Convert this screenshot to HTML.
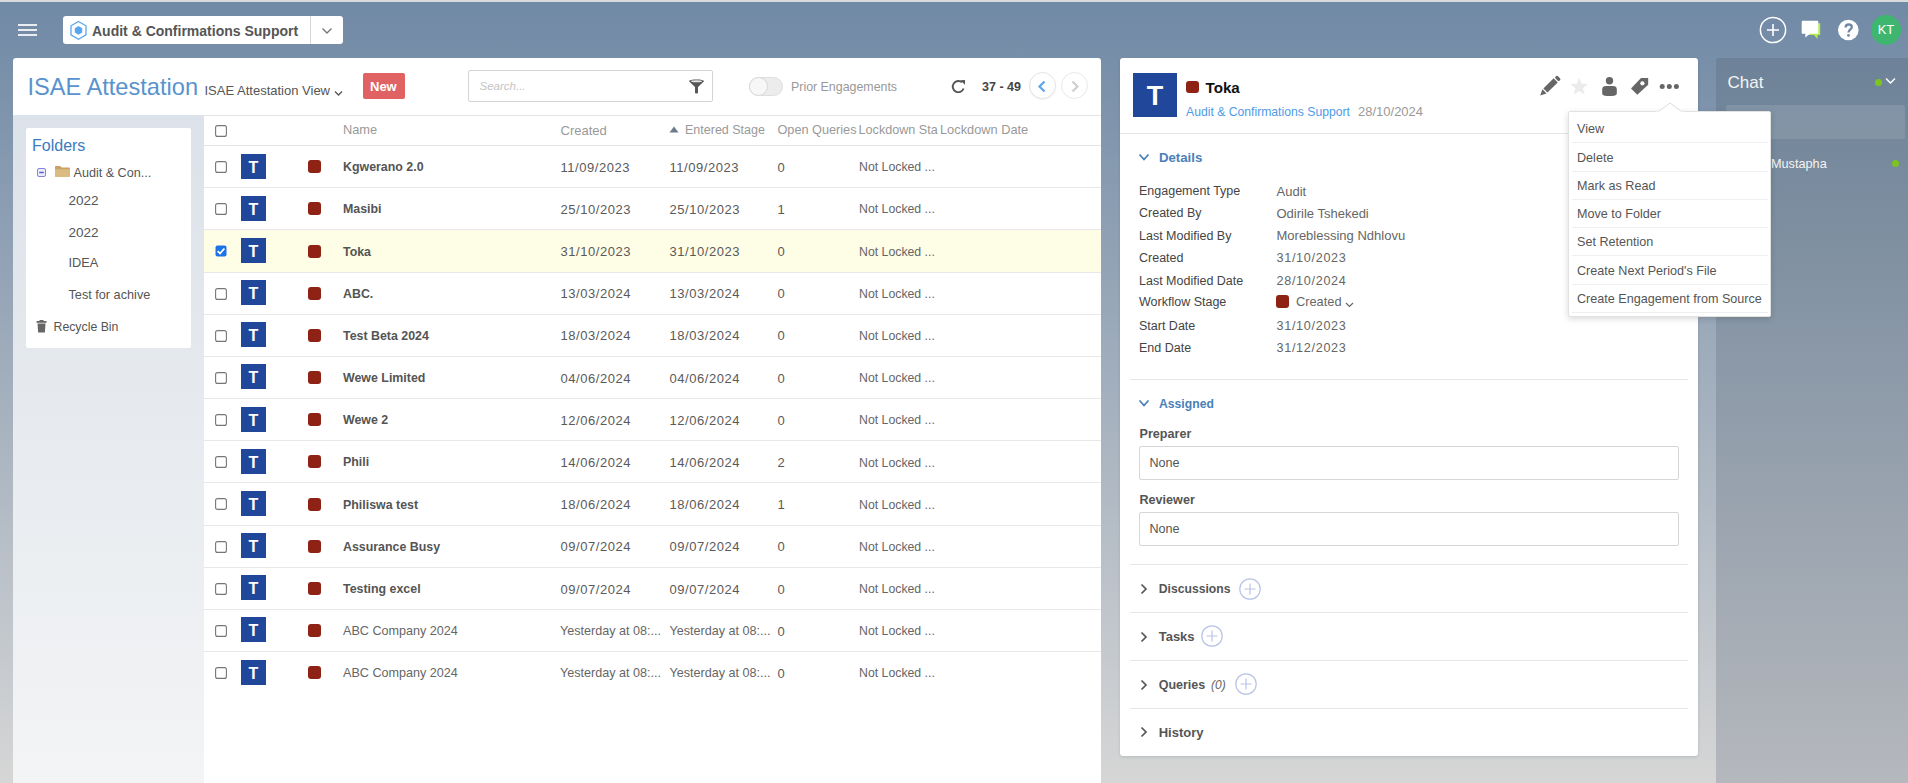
<!DOCTYPE html>
<html><head><meta charset="utf-8"><style>
html,body{margin:0;padding:0}
body{width:1908px;height:783px;overflow:hidden;position:relative;font-family:'Liberation Sans', sans-serif;background:linear-gradient(to bottom,#7089a5 0px,#d6d6d6 783px)}
.t{position:absolute;white-space:nowrap}
.b{position:absolute}
svg.b{overflow:visible}
</style></head><body>
<div class="b" style="left:0px;top:0px;width:1908px;height:2px;background:#d9dadb"></div>
<div class="b" style="left:18px;top:24px;width:19px;height:2px;background:#e9edf2"></div>
<div class="b" style="left:18px;top:29px;width:19px;height:2px;background:#e9edf2"></div>
<div class="b" style="left:18px;top:34px;width:19px;height:2px;background:#e9edf2"></div>
<div class="b" style="left:63px;top:16px;width:280px;height:28px;background:#fff;border-radius:3px"></div>
<div class="b" style="left:310px;top:16px;width:1px;height:28px;background:#d6d6d6"></div>
<svg class="b" style="left:69px;top:20px" width="19" height="21" viewBox="0 0 19 21"><polygon points="9.5,1.5 17,5.8 17,14.8 9.5,19.3 2,14.8 2,5.8" fill="none" stroke="#5aa6ee" stroke-width="1.3"/><polygon points="9.5,6 13.2,8.2 13.2,12.6 9.5,14.8 5.8,12.6 5.8,8.2" fill="#5aa6ee"/></svg>
<div class="t" style="left:92px;top:24.15px;font-size:14px;line-height:14px;color:#555;font-weight:bold;font-style:normal;letter-spacing:0px;">Audit &amp; Confirmations Support</div>
<svg class="b" style="left:321px;top:27px" width="12" height="8" viewBox="0 0 12 8"><polyline points="1.5,1.5 6,6 10.5,1.5" fill="none" stroke="#777" stroke-width="1.4"/></svg>
<svg class="b" style="left:1759px;top:16px" width="28" height="28" viewBox="0 0 28 28"><circle cx="14" cy="14" r="12.6" fill="none" stroke="#fff" stroke-width="1.5"/><path d="M14 8v12M8 14h12" stroke="#fff" stroke-width="1.6"/></svg>
<svg class="b" style="left:1800px;top:19px" width="22" height="22" viewBox="0 0 22 22"><path d="M5 4.2h15.2v11.8H17.5v4l-3.5-4H7.5z" fill="#b5f04a"/><path d="M2.6 1.8h14.8c.5 0 .9.4.9.9v11.2c0 .5-.4.9-.9.9H9.8l-4.5 3.6v-3.6H2.6c-.5 0-.9-.4-.9-.9V2.7c0-.5.4-.9.9-.9z" fill="#fff"/></svg>
<svg class="b" style="left:1830px;top:14px" width="40" height="32" viewBox="1830 14 40 32"><circle cx="1848.3" cy="30" r="10.3" fill="#fff"/><path d="M1845.6 27.4C1845.6 25.4 1846.9 24.5 1848.7 24.5C1850.6 24.5 1851.8 25.6 1851.8 27.1C1851.8 28.7 1850.5 29.3 1849.6 30.1C1848.9 30.7 1848.6 31.3 1848.6 32.6" fill="none" stroke="#7189a5" stroke-width="2.3"/><circle cx="1848.5" cy="35.4" r="1.4" fill="#7189a5"/></svg>
<div class="b" style="left:1871px;top:15px;width:30px;height:30px;background:#3fb66f;border-radius:50%"></div>
<div class="t" style="left:1876px;top:22.80px;font-size:13px;line-height:13px;color:#fff;font-weight:normal;font-style:normal;letter-spacing:0px;width:20px;text-align:center;left:1876px">KT</div>
<div class="b" style="left:13px;top:58px;width:1088px;height:725px;background:#fff;border-radius:3px 3px 0 0"></div>
<div class="t" style="left:27.5px;top:76.22px;font-size:23.6px;line-height:23.6px;color:#5893cd;font-weight:normal;font-style:normal;letter-spacing:0px;">ISAE Attestation</div>
<div class="t" style="left:204.5px;top:84.00px;font-size:13px;line-height:13px;color:#555;font-weight:normal;font-style:normal;letter-spacing:0px;">ISAE Attestation View</div>
<svg class="b" style="left:334px;top:90px" width="9" height="7" viewBox="0 0 9 7"><polyline points="1,1.5 4.5,5 8,1.5" fill="none" stroke="#555" stroke-width="1.3"/></svg>
<div class="b" style="left:363px;top:73px;width:42px;height:26px;background:#e06262;border-radius:2px"></div>
<div class="t" style="left:370px;top:79.50px;font-size:13px;line-height:13px;color:#fff;font-weight:bold;font-style:normal;letter-spacing:0px;">New</div>
<div class="b" style="left:468px;top:70px;width:245px;height:32px;background:#fff;border:1px solid #d4d4d4;box-sizing:border-box;border-radius:2px"></div>
<div class="t" style="left:479.5px;top:81.27px;font-size:11.5px;line-height:11.5px;color:#c4c4c4;font-weight:normal;font-style:italic;letter-spacing:0px;">Search...</div>
<svg class="b" style="left:688px;top:79px" width="17" height="15" viewBox="0 0 17 15"><path d="M1 2.2C1 1 4.5.5 8.5.5S16 1 16 2.2L10 8v5.5c0 .6-.7 1-1.5 1s-1.5-.4-1.5-1V8z" fill="#575757"/><ellipse cx="8.5" cy="2.3" rx="5.5" ry="1" fill="#e6e6e6"/></svg>
<div class="b" style="left:749px;top:77px;width:34px;height:19px;background:#ececec;border:1px solid #dedede;box-sizing:border-box;border-radius:10px"></div>
<div class="b" style="left:749px;top:77px;width:19px;height:19px;background:#f7f7f7;border:1px solid #d8d8d8;box-sizing:border-box;border-radius:50%"></div>
<div class="t" style="left:791px;top:80.50px;font-size:12.4px;line-height:12.4px;color:#999;font-weight:normal;font-style:normal;letter-spacing:0px;">Prior Engagements</div>
<svg class="b" style="left:950px;top:79px" width="17" height="15" viewBox="0 0 17 15"><path d="M13.6 9.5A5.6 5.6 0 1 1 12 3.3" fill="none" stroke="#555" stroke-width="1.9"/><path d="M10.2 1.2L15 1v4.8z" fill="#555"/></svg>
<div class="t" style="left:982px;top:81.02px;font-size:12.5px;line-height:12.5px;color:#444;font-weight:bold;font-style:normal;letter-spacing:0px;">37 - 49</div>
<div class="b" style="left:1029px;top:72px;width:27px;height:27px;background:#fff;border:1px solid #e3e3e3;box-sizing:border-box;border-radius:50%;box-shadow:0 1px 1px rgba(0,0,0,.05)"></div>
<svg class="b" style="left:1037px;top:80px" width="10" height="13" viewBox="0 0 10 13"><polyline points="7.5,1.5 2.5,6.5 7.5,11.5" fill="none" stroke="#5aa5ee" stroke-width="2.2"/></svg>
<div class="b" style="left:1061px;top:72px;width:27px;height:27px;background:#fff;border:1px solid #e8e8e8;box-sizing:border-box;border-radius:50%"></div>
<svg class="b" style="left:1070px;top:80px" width="10" height="13" viewBox="0 0 10 13"><polyline points="2.5,1.5 7.5,6.5 2.5,11.5" fill="none" stroke="#cfcfcf" stroke-width="2.2"/></svg>
<div class="b" style="left:13px;top:115px;width:191px;height:668px;background:linear-gradient(to bottom,#dce2e9,#f3f4f5)"></div>
<div class="b" style="left:26px;top:128px;width:165px;height:220px;background:#fff;border-radius:2px"></div>
<div class="t" style="left:32px;top:138.26px;font-size:16px;line-height:16px;color:#3a7cbf;font-weight:normal;font-style:normal;letter-spacing:0px;">Folders</div>
<svg class="b" style="left:37px;top:168px" width="9" height="9" viewBox="0 0 9 9"><rect x=".5" y=".5" width="8" height="8" rx="1.5" fill="#ececfa" stroke="#8484d0"/><path d="M2.2 4.5h4.6" stroke="#5c5cd8" stroke-width="1.5"/></svg>
<svg class="b" style="left:55px;top:166px" width="15" height="11" viewBox="0 0 15 12" preserveAspectRatio="none"><path d="M0 1.2C0 .5.5 0 1.2 0h4l1.5 1.5h7c.7 0 1.3.5 1.3 1.2v8c0 .7-.6 1.3-1.3 1.3H1.2C.5 12 0 11.4 0 10.7z" fill="#c9a263"/><path d="M0 3.5h15v7.2c0 .7-.6 1.3-1.3 1.3H1.2C.5 12 0 11.4 0 10.7z" fill="#dcbb80"/></svg>
<div class="t" style="left:73.5px;top:167.13px;font-size:12.6px;line-height:12.6px;color:#555;font-weight:normal;font-style:normal;letter-spacing:0px;">Audit &amp; Con...</div>
<div class="t" style="left:68.5px;top:193.57px;font-size:13.5px;line-height:13.5px;color:#555;font-weight:normal;font-style:normal;letter-spacing:0px;">2022</div>
<div class="t" style="left:68.5px;top:225.57px;font-size:13.5px;line-height:13.5px;color:#555;font-weight:normal;font-style:normal;letter-spacing:0px;">2022</div>
<div class="t" style="left:68.5px;top:257.16px;font-size:12.8px;line-height:12.8px;color:#555;font-weight:normal;font-style:normal;letter-spacing:0px;">IDEA</div>
<div class="t" style="left:68.5px;top:289.25px;font-size:12.7px;line-height:12.7px;color:#555;font-weight:normal;font-style:normal;letter-spacing:0px;">Test for achive</div>
<svg class="b" style="left:36px;top:320px" width="11" height="13" viewBox="0 0 11 13"><rect x="0.5" y="1" width="10" height="1.8" fill="#666"/><rect x="3.5" y="0" width="4" height="1.5" fill="#666"/><path d="M1.5 3.5h8l-.6 9H2.1z" fill="#666"/></svg>
<div class="t" style="left:53.5px;top:320.59px;font-size:12.3px;line-height:12.3px;color:#555;font-weight:normal;font-style:normal;letter-spacing:0px;">Recycle Bin</div>
<div class="b" style="left:204px;top:115px;width:897px;height:1px;background:#e4e4e4"></div>
<div class="b" style="left:204px;top:145px;width:897px;height:1px;background:#e4e4e4"></div>
<svg class="b" style="left:215px;top:125px" width="12" height="12" viewBox="0 0 12 12"><rect x=".6" y=".6" width="10.8" height="10.8" rx="2" fill="#fff" stroke="#767676" stroke-width="1.1"/></svg>
<div class="t" style="left:343px;top:124.16px;font-size:12.8px;line-height:12.8px;color:#999;font-weight:normal;font-style:normal;letter-spacing:0px;">Name</div>
<div class="t" style="left:560.5px;top:124.00px;font-size:13px;line-height:13px;color:#999;font-weight:normal;font-style:normal;letter-spacing:0px;">Created</div>
<svg class="b" style="left:669px;top:126px" width="10" height="7" viewBox="0 0 10 7"><polygon points="5,0.5 9.5,6.5 0.5,6.5" fill="#6d7a8a"/></svg>
<div class="t" style="left:685px;top:124.42px;font-size:12.5px;line-height:12.5px;color:#999;font-weight:normal;font-style:normal;letter-spacing:0px;">Entered Stage</div>
<div class="t" style="left:777.5px;top:124.25px;font-size:12.7px;line-height:12.7px;color:#999;font-weight:normal;font-style:normal;letter-spacing:0px;">Open Queries</div>
<div class="t" style="left:858.6px;top:124.33px;font-size:12.6px;line-height:12.6px;color:#999;font-weight:normal;font-style:normal;letter-spacing:0px;">Lockdown Sta</div>
<div class="t" style="left:940px;top:124.16px;font-size:12.8px;line-height:12.8px;color:#999;font-weight:normal;font-style:normal;letter-spacing:0px;">Lockdown Date</div>
<div class="b" style="left:204px;top:187px;width:897px;height:1px;background:#e8e8e8"></div>
<svg class="b" style="left:215px;top:161px" width="12" height="12" viewBox="0 0 12 12"><rect x=".6" y=".6" width="10.8" height="10.8" rx="2" fill="#fff" stroke="#767676" stroke-width="1.1"/></svg>
<div class="b" style="left:241px;top:153.50px;width:25px;height:25px;background:#21479a;color:#fff;font:bold 16px/27px 'Liberation Sans', sans-serif;text-align:center">T</div>
<div class="b" style="left:308px;top:160.20px;width:13px;height:13px;background:#8e2215;border-radius:3px"></div>
<div class="t" style="left:343px;top:161.20px;font-size:12.4px;line-height:12.4px;color:#555;font-weight:bold;font-style:normal;letter-spacing:0px;">Kgwerano 2.0</div>
<div class="t" style="left:560.5px;top:160.70px;font-size:13px;line-height:13px;color:#5a5a5a;font-weight:normal;font-style:normal;letter-spacing:0.55px;">11/09/2023</div>
<div class="t" style="left:669.5px;top:160.70px;font-size:13px;line-height:13px;color:#5a5a5a;font-weight:normal;font-style:normal;letter-spacing:0.55px;">11/09/2023</div>
<div class="t" style="left:777.5px;top:160.70px;font-size:13px;line-height:13px;color:#5a5a5a;font-weight:normal;font-style:normal;letter-spacing:0px;">0</div>
<div class="t" style="left:859px;top:161.29px;font-size:12.3px;line-height:12.3px;color:#666;font-weight:normal;font-style:normal;letter-spacing:0px;">Not Locked ...</div>
<div class="b" style="left:204px;top:229px;width:897px;height:1px;background:#e8e8e8"></div>
<svg class="b" style="left:215px;top:203px" width="12" height="12" viewBox="0 0 12 12"><rect x=".6" y=".6" width="10.8" height="10.8" rx="2" fill="#fff" stroke="#767676" stroke-width="1.1"/></svg>
<div class="b" style="left:241px;top:195.68px;width:25px;height:25px;background:#21479a;color:#fff;font:bold 16px/27px 'Liberation Sans', sans-serif;text-align:center">T</div>
<div class="b" style="left:308px;top:202.38px;width:13px;height:13px;background:#8e2215;border-radius:3px"></div>
<div class="t" style="left:343px;top:203.38px;font-size:12.4px;line-height:12.4px;color:#555;font-weight:bold;font-style:normal;letter-spacing:0px;">Masibi</div>
<div class="t" style="left:560.5px;top:202.88px;font-size:13px;line-height:13px;color:#5a5a5a;font-weight:normal;font-style:normal;letter-spacing:0.55px;">25/10/2023</div>
<div class="t" style="left:669.5px;top:202.88px;font-size:13px;line-height:13px;color:#5a5a5a;font-weight:normal;font-style:normal;letter-spacing:0.55px;">25/10/2023</div>
<div class="t" style="left:777.5px;top:202.88px;font-size:13px;line-height:13px;color:#5a5a5a;font-weight:normal;font-style:normal;letter-spacing:0px;">1</div>
<div class="t" style="left:859px;top:203.47px;font-size:12.3px;line-height:12.3px;color:#666;font-weight:normal;font-style:normal;letter-spacing:0px;">Not Locked ...</div>
<div class="b" style="left:204px;top:230px;width:897px;height:42px;background:#fefde5"></div>
<div class="b" style="left:204px;top:272px;width:897px;height:1px;background:#e8e8e8"></div>
<svg class="b" style="left:215px;top:245px" width="12" height="12" viewBox="0 0 12 12"><rect x=".5" y=".5" width="11" height="11" rx="2" fill="#1a73e8"/><polyline points="2.6,6.2 5,8.5 9.4,3.5" fill="none" stroke="#fff" stroke-width="1.8"/></svg>
<div class="b" style="left:241px;top:237.86px;width:25px;height:25px;background:#21479a;color:#fff;font:bold 16px/27px 'Liberation Sans', sans-serif;text-align:center">T</div>
<div class="b" style="left:308px;top:244.56px;width:13px;height:13px;background:#8e2215;border-radius:3px"></div>
<div class="t" style="left:343px;top:245.56px;font-size:12.4px;line-height:12.4px;color:#555;font-weight:bold;font-style:normal;letter-spacing:0px;">Toka</div>
<div class="t" style="left:560.5px;top:245.06px;font-size:13px;line-height:13px;color:#5a5a5a;font-weight:normal;font-style:normal;letter-spacing:0.55px;">31/10/2023</div>
<div class="t" style="left:669.5px;top:245.06px;font-size:13px;line-height:13px;color:#5a5a5a;font-weight:normal;font-style:normal;letter-spacing:0.55px;">31/10/2023</div>
<div class="t" style="left:777.5px;top:245.06px;font-size:13px;line-height:13px;color:#5a5a5a;font-weight:normal;font-style:normal;letter-spacing:0px;">0</div>
<div class="t" style="left:859px;top:245.65px;font-size:12.3px;line-height:12.3px;color:#666;font-weight:normal;font-style:normal;letter-spacing:0px;">Not Locked ...</div>
<div class="b" style="left:204px;top:314px;width:897px;height:1px;background:#e8e8e8"></div>
<svg class="b" style="left:215px;top:288px" width="12" height="12" viewBox="0 0 12 12"><rect x=".6" y=".6" width="10.8" height="10.8" rx="2" fill="#fff" stroke="#767676" stroke-width="1.1"/></svg>
<div class="b" style="left:241px;top:280.04px;width:25px;height:25px;background:#21479a;color:#fff;font:bold 16px/27px 'Liberation Sans', sans-serif;text-align:center">T</div>
<div class="b" style="left:308px;top:286.74px;width:13px;height:13px;background:#8e2215;border-radius:3px"></div>
<div class="t" style="left:343px;top:287.74px;font-size:12.4px;line-height:12.4px;color:#555;font-weight:bold;font-style:normal;letter-spacing:0px;">ABC.</div>
<div class="t" style="left:560.5px;top:287.24px;font-size:13px;line-height:13px;color:#5a5a5a;font-weight:normal;font-style:normal;letter-spacing:0.55px;">13/03/2024</div>
<div class="t" style="left:669.5px;top:287.24px;font-size:13px;line-height:13px;color:#5a5a5a;font-weight:normal;font-style:normal;letter-spacing:0.55px;">13/03/2024</div>
<div class="t" style="left:777.5px;top:287.24px;font-size:13px;line-height:13px;color:#5a5a5a;font-weight:normal;font-style:normal;letter-spacing:0px;">0</div>
<div class="t" style="left:859px;top:287.83px;font-size:12.3px;line-height:12.3px;color:#666;font-weight:normal;font-style:normal;letter-spacing:0px;">Not Locked ...</div>
<div class="b" style="left:204px;top:356px;width:897px;height:1px;background:#e8e8e8"></div>
<svg class="b" style="left:215px;top:330px" width="12" height="12" viewBox="0 0 12 12"><rect x=".6" y=".6" width="10.8" height="10.8" rx="2" fill="#fff" stroke="#767676" stroke-width="1.1"/></svg>
<div class="b" style="left:241px;top:322.22px;width:25px;height:25px;background:#21479a;color:#fff;font:bold 16px/27px 'Liberation Sans', sans-serif;text-align:center">T</div>
<div class="b" style="left:308px;top:328.92px;width:13px;height:13px;background:#8e2215;border-radius:3px"></div>
<div class="t" style="left:343px;top:329.92px;font-size:12.4px;line-height:12.4px;color:#555;font-weight:bold;font-style:normal;letter-spacing:0px;">Test Beta 2024</div>
<div class="t" style="left:560.5px;top:329.42px;font-size:13px;line-height:13px;color:#5a5a5a;font-weight:normal;font-style:normal;letter-spacing:0.55px;">18/03/2024</div>
<div class="t" style="left:669.5px;top:329.42px;font-size:13px;line-height:13px;color:#5a5a5a;font-weight:normal;font-style:normal;letter-spacing:0.55px;">18/03/2024</div>
<div class="t" style="left:777.5px;top:329.42px;font-size:13px;line-height:13px;color:#5a5a5a;font-weight:normal;font-style:normal;letter-spacing:0px;">0</div>
<div class="t" style="left:859px;top:330.01px;font-size:12.3px;line-height:12.3px;color:#666;font-weight:normal;font-style:normal;letter-spacing:0px;">Not Locked ...</div>
<div class="b" style="left:204px;top:398px;width:897px;height:1px;background:#e8e8e8"></div>
<svg class="b" style="left:215px;top:372px" width="12" height="12" viewBox="0 0 12 12"><rect x=".6" y=".6" width="10.8" height="10.8" rx="2" fill="#fff" stroke="#767676" stroke-width="1.1"/></svg>
<div class="b" style="left:241px;top:364.40px;width:25px;height:25px;background:#21479a;color:#fff;font:bold 16px/27px 'Liberation Sans', sans-serif;text-align:center">T</div>
<div class="b" style="left:308px;top:371.10px;width:13px;height:13px;background:#8e2215;border-radius:3px"></div>
<div class="t" style="left:343px;top:372.10px;font-size:12.4px;line-height:12.4px;color:#555;font-weight:bold;font-style:normal;letter-spacing:0px;">Wewe Limited</div>
<div class="t" style="left:560.5px;top:371.60px;font-size:13px;line-height:13px;color:#5a5a5a;font-weight:normal;font-style:normal;letter-spacing:0.55px;">04/06/2024</div>
<div class="t" style="left:669.5px;top:371.60px;font-size:13px;line-height:13px;color:#5a5a5a;font-weight:normal;font-style:normal;letter-spacing:0.55px;">04/06/2024</div>
<div class="t" style="left:777.5px;top:371.60px;font-size:13px;line-height:13px;color:#5a5a5a;font-weight:normal;font-style:normal;letter-spacing:0px;">0</div>
<div class="t" style="left:859px;top:372.19px;font-size:12.3px;line-height:12.3px;color:#666;font-weight:normal;font-style:normal;letter-spacing:0px;">Not Locked ...</div>
<div class="b" style="left:204px;top:440px;width:897px;height:1px;background:#e8e8e8"></div>
<svg class="b" style="left:215px;top:414px" width="12" height="12" viewBox="0 0 12 12"><rect x=".6" y=".6" width="10.8" height="10.8" rx="2" fill="#fff" stroke="#767676" stroke-width="1.1"/></svg>
<div class="b" style="left:241px;top:406.58px;width:25px;height:25px;background:#21479a;color:#fff;font:bold 16px/27px 'Liberation Sans', sans-serif;text-align:center">T</div>
<div class="b" style="left:308px;top:413.28px;width:13px;height:13px;background:#8e2215;border-radius:3px"></div>
<div class="t" style="left:343px;top:414.28px;font-size:12.4px;line-height:12.4px;color:#555;font-weight:bold;font-style:normal;letter-spacing:0px;">Wewe 2</div>
<div class="t" style="left:560.5px;top:413.78px;font-size:13px;line-height:13px;color:#5a5a5a;font-weight:normal;font-style:normal;letter-spacing:0.55px;">12/06/2024</div>
<div class="t" style="left:669.5px;top:413.78px;font-size:13px;line-height:13px;color:#5a5a5a;font-weight:normal;font-style:normal;letter-spacing:0.55px;">12/06/2024</div>
<div class="t" style="left:777.5px;top:413.78px;font-size:13px;line-height:13px;color:#5a5a5a;font-weight:normal;font-style:normal;letter-spacing:0px;">0</div>
<div class="t" style="left:859px;top:414.37px;font-size:12.3px;line-height:12.3px;color:#666;font-weight:normal;font-style:normal;letter-spacing:0px;">Not Locked ...</div>
<div class="b" style="left:204px;top:482px;width:897px;height:1px;background:#e8e8e8"></div>
<svg class="b" style="left:215px;top:456px" width="12" height="12" viewBox="0 0 12 12"><rect x=".6" y=".6" width="10.8" height="10.8" rx="2" fill="#fff" stroke="#767676" stroke-width="1.1"/></svg>
<div class="b" style="left:241px;top:448.76px;width:25px;height:25px;background:#21479a;color:#fff;font:bold 16px/27px 'Liberation Sans', sans-serif;text-align:center">T</div>
<div class="b" style="left:308px;top:455.46px;width:13px;height:13px;background:#8e2215;border-radius:3px"></div>
<div class="t" style="left:343px;top:456.46px;font-size:12.4px;line-height:12.4px;color:#555;font-weight:bold;font-style:normal;letter-spacing:0px;">Phili</div>
<div class="t" style="left:560.5px;top:455.96px;font-size:13px;line-height:13px;color:#5a5a5a;font-weight:normal;font-style:normal;letter-spacing:0.55px;">14/06/2024</div>
<div class="t" style="left:669.5px;top:455.96px;font-size:13px;line-height:13px;color:#5a5a5a;font-weight:normal;font-style:normal;letter-spacing:0.55px;">14/06/2024</div>
<div class="t" style="left:777.5px;top:455.96px;font-size:13px;line-height:13px;color:#5a5a5a;font-weight:normal;font-style:normal;letter-spacing:0px;">2</div>
<div class="t" style="left:859px;top:456.55px;font-size:12.3px;line-height:12.3px;color:#666;font-weight:normal;font-style:normal;letter-spacing:0px;">Not Locked ...</div>
<div class="b" style="left:204px;top:525px;width:897px;height:1px;background:#e8e8e8"></div>
<svg class="b" style="left:215px;top:498px" width="12" height="12" viewBox="0 0 12 12"><rect x=".6" y=".6" width="10.8" height="10.8" rx="2" fill="#fff" stroke="#767676" stroke-width="1.1"/></svg>
<div class="b" style="left:241px;top:490.94px;width:25px;height:25px;background:#21479a;color:#fff;font:bold 16px/27px 'Liberation Sans', sans-serif;text-align:center">T</div>
<div class="b" style="left:308px;top:497.64px;width:13px;height:13px;background:#8e2215;border-radius:3px"></div>
<div class="t" style="left:343px;top:498.64px;font-size:12.4px;line-height:12.4px;color:#555;font-weight:bold;font-style:normal;letter-spacing:0px;">Philiswa test</div>
<div class="t" style="left:560.5px;top:498.14px;font-size:13px;line-height:13px;color:#5a5a5a;font-weight:normal;font-style:normal;letter-spacing:0.55px;">18/06/2024</div>
<div class="t" style="left:669.5px;top:498.14px;font-size:13px;line-height:13px;color:#5a5a5a;font-weight:normal;font-style:normal;letter-spacing:0.55px;">18/06/2024</div>
<div class="t" style="left:777.5px;top:498.14px;font-size:13px;line-height:13px;color:#5a5a5a;font-weight:normal;font-style:normal;letter-spacing:0px;">1</div>
<div class="t" style="left:859px;top:498.73px;font-size:12.3px;line-height:12.3px;color:#666;font-weight:normal;font-style:normal;letter-spacing:0px;">Not Locked ...</div>
<div class="b" style="left:204px;top:567px;width:897px;height:1px;background:#e8e8e8"></div>
<svg class="b" style="left:215px;top:541px" width="12" height="12" viewBox="0 0 12 12"><rect x=".6" y=".6" width="10.8" height="10.8" rx="2" fill="#fff" stroke="#767676" stroke-width="1.1"/></svg>
<div class="b" style="left:241px;top:533.12px;width:25px;height:25px;background:#21479a;color:#fff;font:bold 16px/27px 'Liberation Sans', sans-serif;text-align:center">T</div>
<div class="b" style="left:308px;top:539.82px;width:13px;height:13px;background:#8e2215;border-radius:3px"></div>
<div class="t" style="left:343px;top:540.82px;font-size:12.4px;line-height:12.4px;color:#555;font-weight:bold;font-style:normal;letter-spacing:0px;">Assurance Busy</div>
<div class="t" style="left:560.5px;top:540.32px;font-size:13px;line-height:13px;color:#5a5a5a;font-weight:normal;font-style:normal;letter-spacing:0.55px;">09/07/2024</div>
<div class="t" style="left:669.5px;top:540.32px;font-size:13px;line-height:13px;color:#5a5a5a;font-weight:normal;font-style:normal;letter-spacing:0.55px;">09/07/2024</div>
<div class="t" style="left:777.5px;top:540.32px;font-size:13px;line-height:13px;color:#5a5a5a;font-weight:normal;font-style:normal;letter-spacing:0px;">0</div>
<div class="t" style="left:859px;top:540.91px;font-size:12.3px;line-height:12.3px;color:#666;font-weight:normal;font-style:normal;letter-spacing:0px;">Not Locked ...</div>
<div class="b" style="left:204px;top:609px;width:897px;height:1px;background:#e8e8e8"></div>
<svg class="b" style="left:215px;top:583px" width="12" height="12" viewBox="0 0 12 12"><rect x=".6" y=".6" width="10.8" height="10.8" rx="2" fill="#fff" stroke="#767676" stroke-width="1.1"/></svg>
<div class="b" style="left:241px;top:575.30px;width:25px;height:25px;background:#21479a;color:#fff;font:bold 16px/27px 'Liberation Sans', sans-serif;text-align:center">T</div>
<div class="b" style="left:308px;top:582.00px;width:13px;height:13px;background:#8e2215;border-radius:3px"></div>
<div class="t" style="left:343px;top:583.00px;font-size:12.4px;line-height:12.4px;color:#555;font-weight:bold;font-style:normal;letter-spacing:0px;">Testing excel</div>
<div class="t" style="left:560.5px;top:582.50px;font-size:13px;line-height:13px;color:#5a5a5a;font-weight:normal;font-style:normal;letter-spacing:0.55px;">09/07/2024</div>
<div class="t" style="left:669.5px;top:582.50px;font-size:13px;line-height:13px;color:#5a5a5a;font-weight:normal;font-style:normal;letter-spacing:0.55px;">09/07/2024</div>
<div class="t" style="left:777.5px;top:582.50px;font-size:13px;line-height:13px;color:#5a5a5a;font-weight:normal;font-style:normal;letter-spacing:0px;">0</div>
<div class="t" style="left:859px;top:583.09px;font-size:12.3px;line-height:12.3px;color:#666;font-weight:normal;font-style:normal;letter-spacing:0px;">Not Locked ...</div>
<div class="b" style="left:204px;top:651px;width:897px;height:1px;background:#e8e8e8"></div>
<svg class="b" style="left:215px;top:625px" width="12" height="12" viewBox="0 0 12 12"><rect x=".6" y=".6" width="10.8" height="10.8" rx="2" fill="#fff" stroke="#767676" stroke-width="1.1"/></svg>
<div class="b" style="left:241px;top:617.48px;width:25px;height:25px;background:#21479a;color:#fff;font:bold 16px/27px 'Liberation Sans', sans-serif;text-align:center">T</div>
<div class="b" style="left:308px;top:624.18px;width:13px;height:13px;background:#8e2215;border-radius:3px"></div>
<div class="t" style="left:343px;top:625.01px;font-size:12.6px;line-height:12.6px;color:#666;font-weight:normal;font-style:normal;letter-spacing:0px;">ABC Company 2024</div>
<div class="t" style="left:560px;top:625.01px;font-size:12.6px;line-height:12.6px;color:#666;font-weight:normal;font-style:normal;letter-spacing:0px;">Yesterday at 08:...</div>
<div class="t" style="left:669.5px;top:625.01px;font-size:12.6px;line-height:12.6px;color:#666;font-weight:normal;font-style:normal;letter-spacing:0px;">Yesterday at 08:...</div>
<div class="t" style="left:777.5px;top:624.68px;font-size:13px;line-height:13px;color:#5a5a5a;font-weight:normal;font-style:normal;letter-spacing:0px;">0</div>
<div class="t" style="left:859px;top:625.27px;font-size:12.3px;line-height:12.3px;color:#666;font-weight:normal;font-style:normal;letter-spacing:0px;">Not Locked ...</div>
<svg class="b" style="left:215px;top:667px" width="12" height="12" viewBox="0 0 12 12"><rect x=".6" y=".6" width="10.8" height="10.8" rx="2" fill="#fff" stroke="#767676" stroke-width="1.1"/></svg>
<div class="b" style="left:241px;top:659.66px;width:25px;height:25px;background:#21479a;color:#fff;font:bold 16px/27px 'Liberation Sans', sans-serif;text-align:center">T</div>
<div class="b" style="left:308px;top:666.36px;width:13px;height:13px;background:#8e2215;border-radius:3px"></div>
<div class="t" style="left:343px;top:667.19px;font-size:12.6px;line-height:12.6px;color:#666;font-weight:normal;font-style:normal;letter-spacing:0px;">ABC Company 2024</div>
<div class="t" style="left:560px;top:667.19px;font-size:12.6px;line-height:12.6px;color:#666;font-weight:normal;font-style:normal;letter-spacing:0px;">Yesterday at 08:...</div>
<div class="t" style="left:669.5px;top:667.19px;font-size:12.6px;line-height:12.6px;color:#666;font-weight:normal;font-style:normal;letter-spacing:0px;">Yesterday at 08:...</div>
<div class="t" style="left:777.5px;top:666.86px;font-size:13px;line-height:13px;color:#5a5a5a;font-weight:normal;font-style:normal;letter-spacing:0px;">0</div>
<div class="t" style="left:859px;top:667.45px;font-size:12.3px;line-height:12.3px;color:#666;font-weight:normal;font-style:normal;letter-spacing:0px;">Not Locked ...</div>
<div class="b" style="left:1120px;top:58px;width:578px;height:698px;background:#fff;border-radius:3px;box-shadow:0 1px 3px rgba(0,0,0,.12)"></div>
<div class="b" style="left:1133px;top:73px;width:44px;height:44px;background:#21479a;color:#fff;font:bold 27px/46px 'Liberation Sans', sans-serif;text-align:center">T</div>
<div class="b" style="left:1186px;top:81px;width:13px;height:12px;background:#8e2215;border-radius:3px"></div>
<div class="t" style="left:1205.5px;top:80.13px;font-size:15.2px;line-height:15.2px;color:#111;font-weight:bold;font-style:normal;letter-spacing:0px;">Toka</div>
<div class="t" style="left:1186px;top:105.67px;font-size:12.2px;line-height:12.2px;color:#4e9be6;font-weight:normal;font-style:normal;letter-spacing:0px;">Audit &amp; Confirmations Support</div>
<div class="t" style="left:1358px;top:105.00px;font-size:13px;line-height:13px;color:#999;font-weight:normal;font-style:normal;letter-spacing:0px;">28/10/2024</div>
<div class="b" style="left:1120px;top:133px;width:578px;height:1px;background:#e6e6e6"></div>
<svg class="b" style="left:1530px;top:65px" width="160" height="45" viewBox="0 0 160 45"><g transform="translate(10.2,30.6) rotate(-44.4)" fill="#666"><polygon points="0,0 6,-2.9 6,2.9"/><rect x="7.3" y="-2.9" width="14.4" height="5.8"/><rect x="22.9" y="-2.9" width="3.4" height="5.8" rx="1.5"/></g><polygon points="49.20,12.60 51.49,18.84 58.14,19.10 52.91,23.21 54.73,29.60 49.20,25.90 43.67,29.60 45.49,23.21 40.26,19.10 46.91,18.84" fill="#ebebeb"/><circle cx="79.5" cy="15.8" r="3.7" fill="#666"/><path d="M72.2 24.2C72.2 22 73.8 21 76 21H83C85.2 21 86.8 22 86.8 24.2V28.4C86.8 30.6 83 31 79.5 31S72.2 30.6 72.2 28.4Z" fill="#666"/><path d="M111 13H118.2V19.7L107.3 29.8L101 23.5Z" fill="#666"/><circle cx="112.4" cy="18.3" r="2.1" fill="#fff"/><circle cx="132.2" cy="21.4" r="2.5" fill="#666"/><circle cx="139.3" cy="21.4" r="2.5" fill="#666"/><circle cx="146.4" cy="21.4" r="2.5" fill="#666"/></svg>
<svg class="b" style="left:1138px;top:153px" width="12" height="9" viewBox="0 0 12 9"><polyline points="1.5,1.5 6,6.5 10.5,1.5" fill="none" stroke="#4a80b8" stroke-width="1.8"/></svg>
<div class="t" style="left:1159px;top:150.83px;font-size:13.2px;line-height:13.2px;color:#4a80b8;font-weight:bold;font-style:normal;letter-spacing:0px;">Details</div>
<div class="t" style="left:1139px;top:185.42px;font-size:12.5px;line-height:12.5px;color:#444;font-weight:normal;font-style:normal;letter-spacing:0px;">Engagement Type</div>
<div class="t" style="left:1276.5px;top:185.00px;font-size:13px;line-height:13px;color:#666;font-weight:normal;font-style:normal;letter-spacing:0px;">Audit</div>
<div class="t" style="left:1139px;top:207.12px;font-size:12.5px;line-height:12.5px;color:#444;font-weight:normal;font-style:normal;letter-spacing:0px;">Created By</div>
<div class="t" style="left:1276.5px;top:206.70px;font-size:13px;line-height:13px;color:#666;font-weight:normal;font-style:normal;letter-spacing:0px;">Odirile Tshekedi</div>
<div class="t" style="left:1139px;top:229.72px;font-size:12.5px;line-height:12.5px;color:#444;font-weight:normal;font-style:normal;letter-spacing:0px;">Last Modified By</div>
<div class="t" style="left:1276.5px;top:229.30px;font-size:13px;line-height:13px;color:#666;font-weight:normal;font-style:normal;letter-spacing:0px;">Moreblessing Ndhlovu</div>
<div class="t" style="left:1139px;top:252.12px;font-size:12.5px;line-height:12.5px;color:#444;font-weight:normal;font-style:normal;letter-spacing:0px;">Created</div>
<div class="t" style="left:1276.5px;top:252.03px;font-size:12.6px;line-height:12.6px;color:#666;font-weight:normal;font-style:normal;letter-spacing:0.7px;">31/10/2023</div>
<div class="t" style="left:1139px;top:275.12px;font-size:12.5px;line-height:12.5px;color:#444;font-weight:normal;font-style:normal;letter-spacing:0px;">Last Modified Date</div>
<div class="t" style="left:1276.5px;top:275.03px;font-size:12.6px;line-height:12.6px;color:#666;font-weight:normal;font-style:normal;letter-spacing:0.7px;">28/10/2024</div>
<div class="t" style="left:1139px;top:296.42px;font-size:12.5px;line-height:12.5px;color:#444;font-weight:normal;font-style:normal;letter-spacing:0px;">Workflow Stage</div>
<div class="b" style="left:1276px;top:295px;width:13px;height:13px;background:#8e2215;border-radius:3px"></div>
<div class="t" style="left:1296px;top:296.16px;font-size:12.8px;line-height:12.8px;color:#666;font-weight:normal;font-style:normal;letter-spacing:0px;">Created</div>
<svg class="b" style="left:1345px;top:301.5px" width="9" height="6" viewBox="0 0 9 6"><polyline points="1,1 4.5,4.5 8,1" fill="none" stroke="#666" stroke-width="1.2"/></svg>
<div class="t" style="left:1139px;top:320.02px;font-size:12.5px;line-height:12.5px;color:#444;font-weight:normal;font-style:normal;letter-spacing:0px;">Start Date</div>
<div class="t" style="left:1276.5px;top:319.93px;font-size:12.6px;line-height:12.6px;color:#666;font-weight:normal;font-style:normal;letter-spacing:0.7px;">31/10/2023</div>
<div class="t" style="left:1139px;top:341.92px;font-size:12.5px;line-height:12.5px;color:#444;font-weight:normal;font-style:normal;letter-spacing:0px;">End Date</div>
<div class="t" style="left:1276.5px;top:341.83px;font-size:12.6px;line-height:12.6px;color:#666;font-weight:normal;font-style:normal;letter-spacing:0.7px;">31/12/2023</div>
<div class="b" style="left:1130px;top:379px;width:558px;height:1px;background:#e6e6e6"></div>
<svg class="b" style="left:1138px;top:399px" width="12" height="9" viewBox="0 0 12 9"><polyline points="1.5,1.5 6,6.5 10.5,1.5" fill="none" stroke="#4a80b8" stroke-width="1.8"/></svg>
<div class="t" style="left:1159px;top:397.67px;font-size:12.2px;line-height:12.2px;color:#4a80b8;font-weight:bold;font-style:normal;letter-spacing:0px;">Assigned</div>
<div class="t" style="left:1139.5px;top:428.33px;font-size:12.6px;line-height:12.6px;color:#555;font-weight:bold;font-style:normal;letter-spacing:0px;">Preparer</div>
<div class="b" style="left:1139px;top:446px;width:540px;height:34px;border:1px solid #d6d6d6;box-sizing:border-box;border-radius:2px"></div>
<div class="t" style="left:1149.5px;top:457.33px;font-size:12.6px;line-height:12.6px;color:#555;font-weight:normal;font-style:normal;letter-spacing:0px;">None</div>
<div class="t" style="left:1139.5px;top:494.33px;font-size:12.6px;line-height:12.6px;color:#555;font-weight:bold;font-style:normal;letter-spacing:0px;">Reviewer</div>
<div class="b" style="left:1139px;top:512px;width:540px;height:34px;border:1px solid #d6d6d6;box-sizing:border-box;border-radius:2px"></div>
<div class="t" style="left:1149.5px;top:523.33px;font-size:12.6px;line-height:12.6px;color:#555;font-weight:normal;font-style:normal;letter-spacing:0px;">None</div>
<div class="b" style="left:1130px;top:564px;width:558px;height:1px;background:#e6e6e6"></div>
<div class="b" style="left:1130px;top:612px;width:558px;height:1px;background:#e6e6e6"></div>
<div class="b" style="left:1130px;top:660px;width:558px;height:1px;background:#e6e6e6"></div>
<div class="b" style="left:1130px;top:708px;width:558px;height:1px;background:#e6e6e6"></div>
<svg class="b" style="left:1140px;top:583px" width="8" height="12" viewBox="0 0 8 12"><polyline points="1.5,1.5 6,6 1.5,10.5" fill="none" stroke="#555" stroke-width="1.7"/></svg>
<div class="t" style="left:1158.7px;top:582.67px;font-size:12.2px;line-height:12.2px;color:#555;font-weight:bold;font-style:normal;letter-spacing:0px;">Discussions</div>
<svg class="b" style="left:1239px;top:578px" width="22" height="22" viewBox="0 0 22 22"><circle cx="11" cy="11" r="10.2" fill="none" stroke="#b9c3e6" stroke-width="1.2"/><path d="M11 5.5v11M5.5 11h11" stroke="#b9c3e6" stroke-width="1.2"/></svg>
<svg class="b" style="left:1140px;top:631px" width="8" height="12" viewBox="0 0 8 12"><polyline points="1.5,1.5 6,6 1.5,10.5" fill="none" stroke="#555" stroke-width="1.7"/></svg>
<div class="t" style="left:1158.7px;top:630.00px;font-size:13px;line-height:13px;color:#555;font-weight:bold;font-style:normal;letter-spacing:0px;">Tasks</div>
<svg class="b" style="left:1201px;top:625px" width="22" height="22" viewBox="0 0 22 22"><circle cx="11" cy="11" r="10.2" fill="none" stroke="#b9c3e6" stroke-width="1.2"/><path d="M11 5.5v11M5.5 11h11" stroke="#b9c3e6" stroke-width="1.2"/></svg>
<svg class="b" style="left:1140px;top:679px" width="8" height="12" viewBox="0 0 8 12"><polyline points="1.5,1.5 6,6 1.5,10.5" fill="none" stroke="#555" stroke-width="1.7"/></svg>
<div class="t" style="left:1158.7px;top:678.62px;font-size:12.5px;line-height:12.5px;color:#555;font-weight:bold;font-style:normal;letter-spacing:0px;">Queries</div>
<div class="t" style="left:1211px;top:679.34px;font-size:12px;line-height:12px;color:#666;font-weight:normal;font-style:italic;letter-spacing:0px;">(0)</div>
<svg class="b" style="left:1235px;top:673px" width="22" height="22" viewBox="0 0 22 22"><circle cx="11" cy="11" r="10.2" fill="none" stroke="#b9c3e6" stroke-width="1.2"/><path d="M11 5.5v11M5.5 11h11" stroke="#b9c3e6" stroke-width="1.2"/></svg>
<svg class="b" style="left:1140px;top:726px" width="8" height="12" viewBox="0 0 8 12"><polyline points="1.5,1.5 6,6 1.5,10.5" fill="none" stroke="#555" stroke-width="1.7"/></svg>
<div class="t" style="left:1158.7px;top:725.50px;font-size:13px;line-height:13px;color:#555;font-weight:bold;font-style:normal;letter-spacing:0px;">History</div>
<div class="b" style="left:1716px;top:58px;width:192px;height:725px;background:linear-gradient(to bottom,#6d8298,#b5b8bd);border-radius:3px 0 0 0"></div>
<div class="t" style="left:1727.5px;top:73.61px;font-size:17px;line-height:17px;color:#f4f4f4;font-weight:normal;font-style:normal;letter-spacing:0px;">Chat</div>
<div class="b" style="left:1875px;top:79px;width:7px;height:7px;background:#7ec421;border-radius:50%"></div>
<svg class="b" style="left:1885px;top:77px" width="11" height="8" viewBox="0 0 11 8"><polyline points="1,1.5 5.5,6 10,1.5" fill="none" stroke="#fff" stroke-width="1.5"/></svg>
<div class="b" style="left:1726px;top:105px;width:179px;height:34px;background:rgba(255,255,255,.11);border-radius:2px"></div>
<div class="t" style="left:1771px;top:158.05px;font-size:12.7px;line-height:12.7px;color:#f4f4f4;font-weight:normal;font-style:normal;letter-spacing:0px;">Mustapha</div>
<div class="b" style="left:1892px;top:160px;width:7px;height:7px;background:#7ec421;border-radius:50%"></div>
<div class="b" style="left:1568px;top:111px;width:203px;height:206px;background:#fff;border:1px solid #e2e2e2;box-sizing:border-box;border-radius:2px;box-shadow:0 2px 6px rgba(0,0,0,.15)"></div>
<svg class="b" style="left:1659px;top:102px" width="22" height="11" viewBox="0 0 22 11"><polygon points="-2,10.5 11,1 24,10.5" fill="#fff" stroke="#dcdcdc"/><rect x="-3" y="9.6" width="28" height="3" fill="#fff"/></svg>
<div class="t" style="left:1577px;top:123.13px;font-size:12.6px;line-height:12.6px;color:#555;font-weight:normal;font-style:normal;letter-spacing:0px;">View</div>
<div class="b" style="left:1572px;top:142px;width:196px;height:1px;background:#edf0f3"></div>
<div class="t" style="left:1577px;top:152.13px;font-size:12.6px;line-height:12.6px;color:#555;font-weight:normal;font-style:normal;letter-spacing:0px;">Delete</div>
<div class="b" style="left:1572px;top:171px;width:196px;height:1px;background:#edf0f3"></div>
<div class="t" style="left:1577px;top:180.13px;font-size:12.6px;line-height:12.6px;color:#555;font-weight:normal;font-style:normal;letter-spacing:0px;">Mark as Read</div>
<div class="b" style="left:1572px;top:199px;width:196px;height:1px;background:#edf0f3"></div>
<div class="t" style="left:1577px;top:208.13px;font-size:12.6px;line-height:12.6px;color:#555;font-weight:normal;font-style:normal;letter-spacing:0px;">Move to Folder</div>
<div class="b" style="left:1572px;top:227px;width:196px;height:1px;background:#edf0f3"></div>
<div class="t" style="left:1577px;top:236.13px;font-size:12.6px;line-height:12.6px;color:#555;font-weight:normal;font-style:normal;letter-spacing:0px;">Set Retention</div>
<div class="b" style="left:1572px;top:255px;width:196px;height:1px;background:#edf0f3"></div>
<div class="t" style="left:1577px;top:265.13px;font-size:12.6px;line-height:12.6px;color:#555;font-weight:normal;font-style:normal;letter-spacing:0px;">Create Next Period's File</div>
<div class="b" style="left:1572px;top:284px;width:196px;height:1px;background:#edf0f3"></div>
<div class="t" style="left:1577px;top:293.13px;font-size:12.6px;line-height:12.6px;color:#555;font-weight:normal;font-style:normal;letter-spacing:0px;">Create Engagement from Source</div>
<div class="b" style="left:1572px;top:312px;width:196px;height:1px;background:#edf0f3"></div>
</body></html>
